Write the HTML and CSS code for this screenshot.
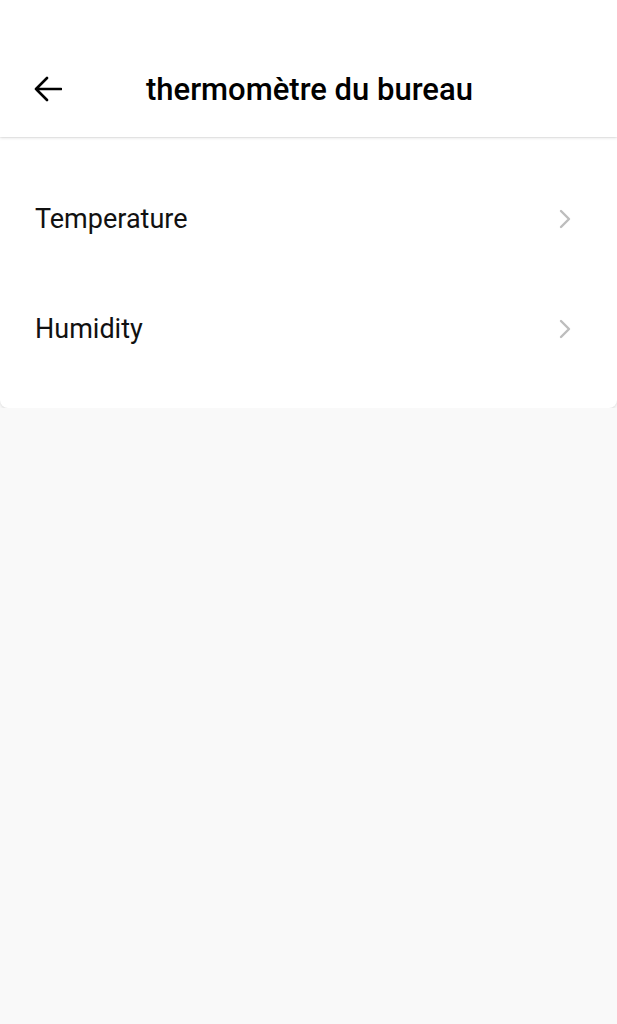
FILE: index.html
```html
<!DOCTYPE html>
<html lang="fr">
<head>
    <meta charset="UTF-8" />
    <title>thermomètre du bureau</title>
    <link rel="stylesheet" href="styles.css">
</head>
<body>
    <header class="topbar">
        <button class="back-btn" aria-label="Retour">
            <svg width="28" height="26" viewBox="0 0 28 26">
                <path d="M27 13H2M13 2L2 13l11 11" fill="none" stroke="#000" stroke-width="2.6" stroke-linecap="round" stroke-linejoin="round"/>
            </svg>
        </button>
        <h1 class="title">thermomètre du bureau</h1>
    </header>

    <div class="card">
        <a class="row" href="#">
            <span class="row-label">Temperature</span>
            <svg class="chevron" width="12" height="20" viewBox="0 0 12 20">
                <path d="M2 2l8 8-8 8" fill="none" stroke="#bdbdbd" stroke-width="2.4" stroke-linecap="round" stroke-linejoin="round"/>
            </svg>
        </a>
        <a class="row" href="#">
            <span class="row-label">Humidity</span>
            <svg class="chevron" width="12" height="20" viewBox="0 0 12 20">
                <path d="M2 2l8 8-8 8" fill="none" stroke="#bdbdbd" stroke-width="2.4" stroke-linecap="round" stroke-linejoin="round"/>
            </svg>
        </a>
    </div>
</body>
</html>
```

FILE: styles.css
```css
body {
    font-family: Roboto, "Noto Sans", sans-serif;
    background-color: #f9f9f9;
    margin: 0;
    padding: 0;
    color: #111;
}
.topbar {
    background-color: white;
    height: 137px;
    padding-top: 41px;
    box-sizing: border-box;
    display: flex;
    align-items: center;
    box-shadow: 0 1px 3px rgba(0,0,0,0.12);
    position: relative;
    z-index: 1;
}
.back-btn {
    background: none;
    border: none;
    padding: 0;
    margin-left: 34px;
    width: 28px;
    height: 26px;
    display: flex;
    cursor: pointer;
}
.title {
    margin: 0 0 0 84px;
    font-size: 31px;
    font-weight: 500;
    color: #000;
}
.card {
    background: white;
    margin-top: 1px;
    padding: 26px 0 24px;
    border-radius: 0 0 8px 8px;
    box-shadow: 0 1px 3px rgba(0,0,0,0.12);
}
.row {
    display: flex;
    align-items: center;
    justify-content: space-between;
    height: 110px;
    padding: 0 46px 0 35px;
    text-decoration: none;
    color: #111;
}
.row-label {
    font-size: 27px;
}
```
